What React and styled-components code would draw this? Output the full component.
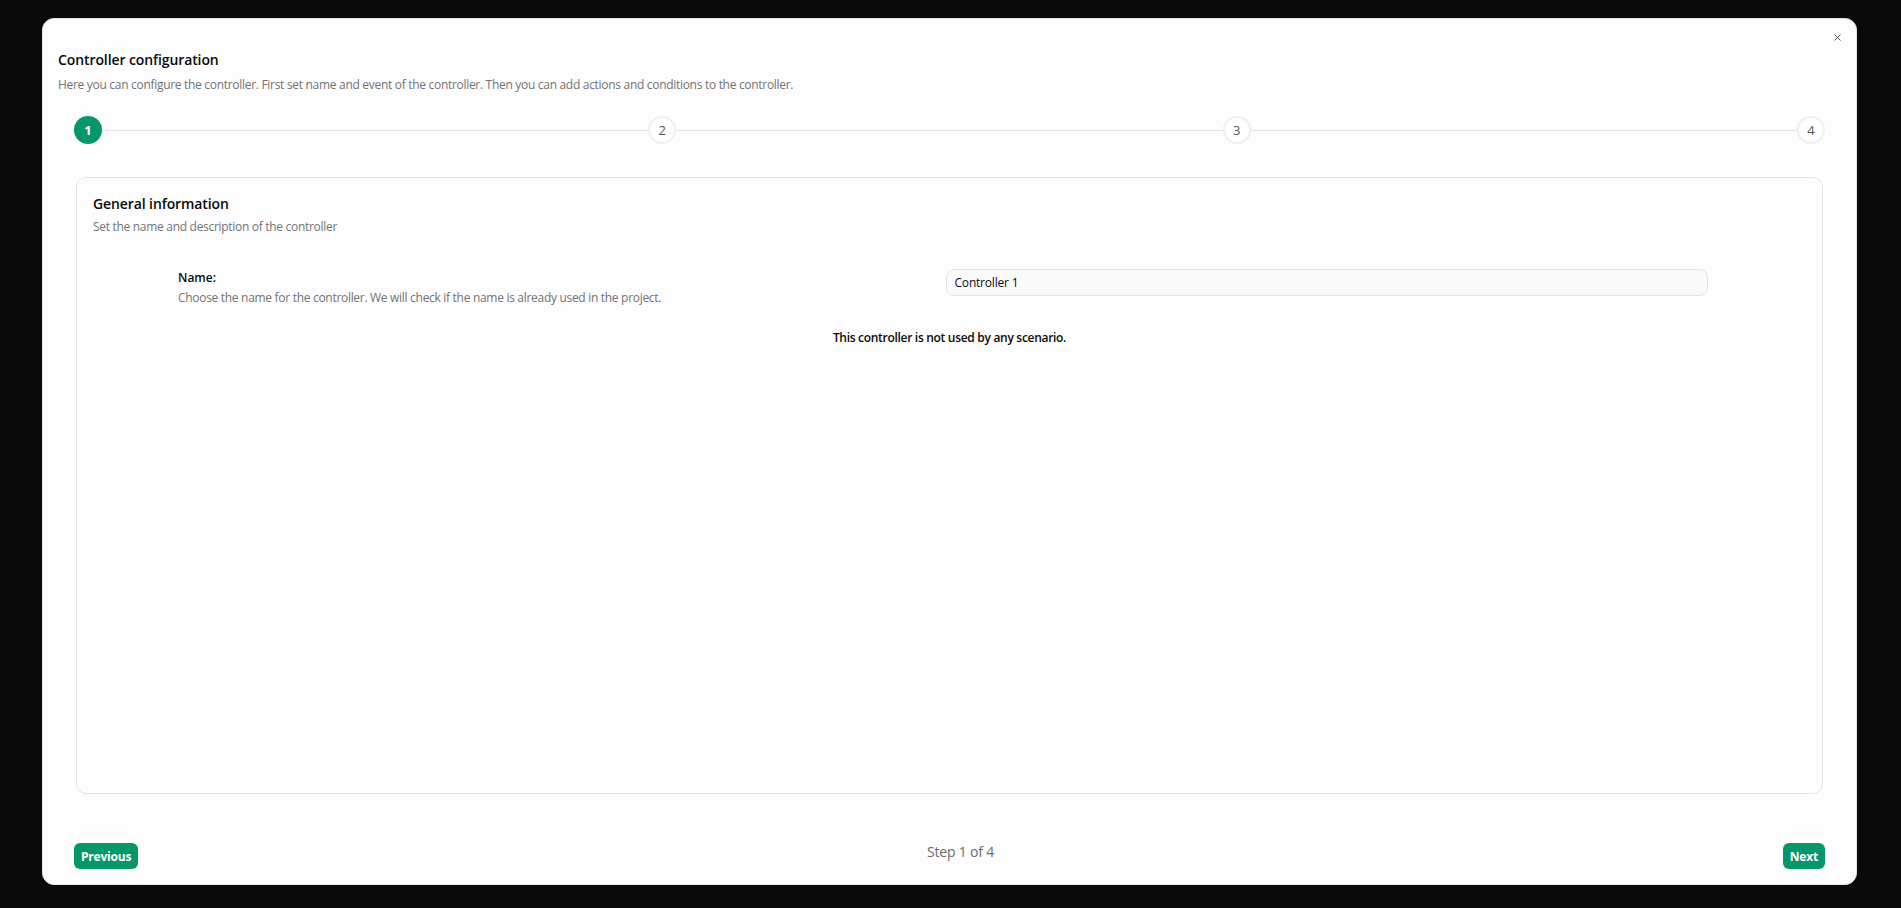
import React from "react";
import styled, { createGlobalStyle } from "styled-components";
import { X } from "lucide-react";

const Global = createGlobalStyle`
  * { box-sizing: border-box; }
  html, body { margin: 0; padding: 0; height: 100%; }
  body {
    background: #0a0a0a;
    font-family: "Open Sans", "Noto Sans", sans-serif;
    color: #0a0a0a;
  }
  #root { height: 100%; }
`;

const Overlay = styled.div`
  height: 908px;
  padding: 18px 44px 23px 42px;
  display: flex;
  background: #0a0a0a;
`;

const Modal = styled.div`
  position: relative;
  flex: 1;
  background: #fdfdfd;
  border: 1px solid #e4e4e4;
  border-radius: 12px;
  padding: 31px 15px 15px 15px;
  display: flex;
  flex-direction: column;
`;

const CloseButton = styled.button`
  position: absolute;
  top: 11px;
  right: 12px;
  width: 14px;
  height: 14px;
  padding: 0;
  border: none;
  background: transparent;
  display: flex;
  align-items: center;
  justify-content: center;
  color: #1a1a1a;
  cursor: pointer;
`;

const Title = styled.h2`
  margin: 0;
  font-size: 14px;
  line-height: 20px;
  font-weight: 600;
  letter-spacing: -0.1px;
`;

const Subtitle = styled.p`
  margin: 7px 0 0;
  font-size: 12px;
  line-height: 16px;
  color: #737373;
  letter-spacing: -0.3px;
`;

const Body = styled.div`
  flex: 1;
  display: flex;
  flex-direction: column;
  padding: 0 16px;
`;

const Stepper = styled.div`
  display: flex;
  align-items: center;
  margin-top: 23px;
  height: 28px;
`;

const StepCircle = styled.div`
  width: 28px;
  height: 28px;
  flex: 0 0 28px;
  border-radius: 50%;
  display: flex;
  align-items: center;
  justify-content: center;
  font-size: 13px;
  font-weight: ${(p) => (p.$active ? 700 : 400)};
  color: ${(p) => (p.$active ? "#ffffff" : "#555555")};
  background: ${(p) => (p.$active ? "#059669" : "#ffffff")};
  border: ${(p) => (p.$active ? "none" : "2px solid #efefef")};
`;

const StepLine = styled.div`
  flex: 1;
  height: 1px;
  background: #e4e4e4;
`;

const Card = styled.section`
  margin: 33px 2px 0;
  height: 617px;
  border: 1px solid #e4e4e4;
  border-radius: 10px;
  padding: 16px 16px;
  display: flex;
  flex-direction: column;
`;

const CardTitle = styled.h3`
  margin: 0;
  font-size: 14px;
  line-height: 20px;
  font-weight: 600;
  letter-spacing: -0.1px;
`;

const CardSubtitle = styled.p`
  margin: 5px 0 0;
  font-size: 12px;
  line-height: 16px;
  color: #737373;
  letter-spacing: -0.3px;
`;

const FieldRow = styled.div`
  display: grid;
  grid-template-columns: 1fr 1fr;
  gap: 5px;
  margin: 34px 98px 0 85px;
  align-items: start;
`;

const FieldLabel = styled.div`
  display: flex;
  flex-direction: column;
  gap: 4px;
  padding-top: 1px;
`;

const LabelName = styled.span`
  font-size: 12px;
  line-height: 16px;
  font-weight: 600;
`;

const LabelHint = styled.span`
  font-size: 12px;
  line-height: 16px;
  color: #737373;
  letter-spacing: -0.3px;
`;

const TextInput = styled.input`
  height: 27px;
  width: 100%;
  border: 1px solid #e4e4e4;
  border-radius: 8px;
  background: #fafafa;
  padding: 0 8px;
  font-family: inherit;
  font-size: 12px;
  color: #0a0a0a;
  outline: none;
  letter-spacing: -0.2px;
`;

const Notice = styled.p`
  margin: 24px 0 0;
  text-align: center;
  font-size: 12px;
  line-height: 16px;
  font-weight: 600;
  letter-spacing: -0.3px;
`;

const Footer = styled.div`
  margin-top: auto;
  display: flex;
  align-items: center;
  justify-content: space-between;
`;

const NavButton = styled.button`
  height: 26px;
  padding: 0 7px;
  border: none;
  border-radius: 6px;
  background: #059669;
  color: #ffffff;
  font-family: inherit;
  font-size: 12px;
  font-weight: 700;
  letter-spacing: -0.2px;
  cursor: pointer;
`;

const StepLabel = styled.span`
  font-size: 14px;
  line-height: 20px;
  color: #6b6b6b;
  letter-spacing: -0.2px;
  margin-top: -8px;
`;

const steps = [1, 2, 3, 4];

export default function App() {
  return (
    <>
      <Global />
      <Overlay>
        <Modal>
          <CloseButton aria-label="Close">
            <X size={11} strokeWidth={1.6} />
          </CloseButton>
          <Title>Controller configuration</Title>
          <Subtitle>
            Here you can configure the controller. First set name and event of the controller. Then you can add actions and conditions to the controller.
          </Subtitle>
          <Body>
            <Stepper>
              {steps.map((s, i) => (
                <React.Fragment key={s}>
                  {i > 0 && <StepLine />}
                  <StepCircle $active={s === 1}>{s}</StepCircle>
                </React.Fragment>
              ))}
            </Stepper>
            <Card>
              <CardTitle>General information</CardTitle>
              <CardSubtitle>Set the name and description of the controller</CardSubtitle>
              <FieldRow>
                <FieldLabel>
                  <LabelName>Name:</LabelName>
                  <LabelHint>
                    Choose the name for the controller. We will check if the name is already used in the project.
                  </LabelHint>
                </FieldLabel>
                <TextInput defaultValue="Controller 1" />
              </FieldRow>
              <Notice>This controller is not used by any scenario.</Notice>
            </Card>
            <Footer>
              <NavButton>Previous</NavButton>
              <StepLabel>Step 1 of 4</StepLabel>
              <NavButton>Next</NavButton>
            </Footer>
          </Body>
        </Modal>
      </Overlay>
    </>
  );
}
